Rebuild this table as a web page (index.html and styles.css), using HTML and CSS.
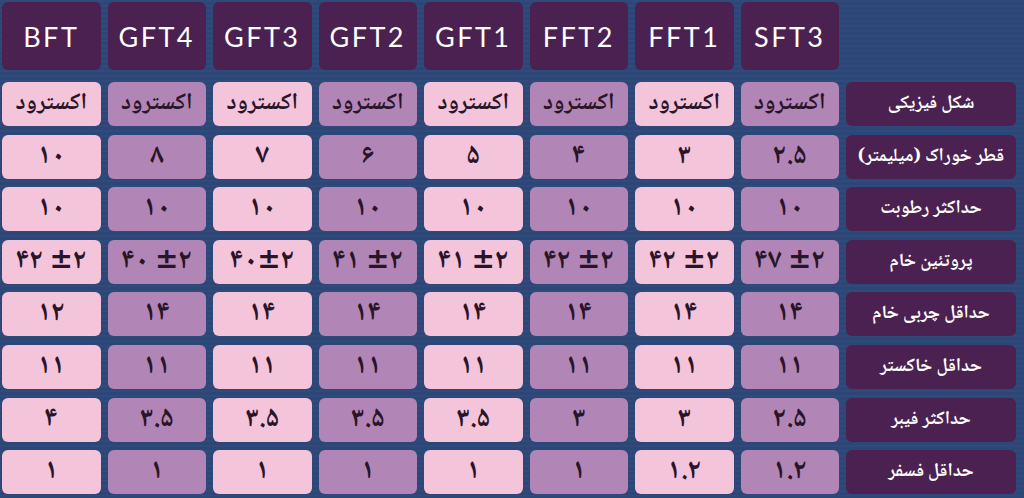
FILE: index.html
```html
<!DOCTYPE html>
<html lang="fa">
<head>
<meta charset="utf-8">
<title>جدول مشخصات خوراک</title>
<link rel="stylesheet" href="styles.css">
</head>
<body>
<div class="page">
  <div class="grid head">
    <div class="hcell">BFT</div>
    <div class="hcell">GFT4</div>
    <div class="hcell">GFT3</div>
    <div class="hcell">GFT2</div>
    <div class="hcell">GFT1</div>
    <div class="hcell">FFT2</div>
    <div class="hcell">FFT1</div>
    <div class="hcell">SFT3</div>
    <div class="hspacer"></div>
  </div>
  <div class="grid body">
    <div class="cell pink word">اکسترود</div>
    <div class="cell mauve word">اکسترود</div>
    <div class="cell pink word">اکسترود</div>
    <div class="cell mauve word">اکسترود</div>
    <div class="cell pink word">اکسترود</div>
    <div class="cell mauve word">اکسترود</div>
    <div class="cell pink word">اکسترود</div>
    <div class="cell mauve word">اکسترود</div>
    <div class="label" dir="rtl">شکل فیزیکی</div>

    <div class="cell pink">۱۰</div>
    <div class="cell mauve">۸</div>
    <div class="cell pink">۷</div>
    <div class="cell mauve">۶</div>
    <div class="cell pink">۵</div>
    <div class="cell mauve">۴</div>
    <div class="cell pink">۳</div>
    <div class="cell mauve">۲.۵</div>
    <div class="label" dir="rtl">قطر خوراک (میلیمتر)</div>

    <div class="cell pink">۱۰</div>
    <div class="cell mauve">۱۰</div>
    <div class="cell pink">۱۰</div>
    <div class="cell mauve">۱۰</div>
    <div class="cell pink">۱۰</div>
    <div class="cell mauve">۱۰</div>
    <div class="cell pink">۱۰</div>
    <div class="cell mauve">۱۰</div>
    <div class="label" dir="rtl">حداکثر رطوبت</div>

    <div class="cell pink">۴۲ ±۲</div>
    <div class="cell mauve">۴۰ ±۲</div>
    <div class="cell pink">۴۰±۲</div>
    <div class="cell mauve">۴۱ ±۲</div>
    <div class="cell pink">۴۱ ±۲</div>
    <div class="cell mauve">۴۲ ±۲</div>
    <div class="cell pink">۴۲ ±۲</div>
    <div class="cell mauve">۴۷ ±۲</div>
    <div class="label" dir="rtl">پروتئین خام</div>

    <div class="cell pink">۱۲</div>
    <div class="cell mauve">۱۴</div>
    <div class="cell pink">۱۴</div>
    <div class="cell mauve">۱۴</div>
    <div class="cell pink">۱۴</div>
    <div class="cell mauve">۱۴</div>
    <div class="cell pink">۱۴</div>
    <div class="cell mauve">۱۴</div>
    <div class="label" dir="rtl">حداقل چربی خام</div>

    <div class="cell pink">۱۱</div>
    <div class="cell mauve">۱۱</div>
    <div class="cell pink">۱۱</div>
    <div class="cell mauve">۱۱</div>
    <div class="cell pink">۱۱</div>
    <div class="cell mauve">۱۱</div>
    <div class="cell pink">۱۱</div>
    <div class="cell mauve">۱۱</div>
    <div class="label" dir="rtl">حداقل خاکستر</div>

    <div class="cell pink">۴</div>
    <div class="cell mauve">۳.۵</div>
    <div class="cell pink">۳.۵</div>
    <div class="cell mauve">۳.۵</div>
    <div class="cell pink">۳.۵</div>
    <div class="cell mauve">۳</div>
    <div class="cell pink">۳</div>
    <div class="cell mauve">۲.۵</div>
    <div class="label" dir="rtl">حداکثر فیبر</div>

    <div class="cell pink">۱</div>
    <div class="cell mauve">۱</div>
    <div class="cell pink">۱</div>
    <div class="cell mauve">۱</div>
    <div class="cell pink">۱</div>
    <div class="cell mauve">۱</div>
    <div class="cell pink">۱.۲</div>
    <div class="cell mauve">۱.۲</div>
    <div class="label" dir="rtl">حداقل فسفر</div>
  </div>
</div>
</body>
</html>
```
FILE: styles.css
```css
html, body {
  margin: 0;
  padding: 0;
}
body {
  width: 1024px;
  height: 498px;
  overflow: hidden;
  background-color: #2b4677;
  background-image: repeating-linear-gradient(180deg, rgba(255,255,255,0.025) 0px, rgba(255,255,255,0.025) 2px, rgba(0,0,0,0) 2px, rgba(0,0,0,0) 5px);
}
.page {
  padding: 2px 0 0 2px;
}
.grid {
  display: grid;
  grid-template-columns: repeat(8, 98.5px) 170px;
  column-gap: 7px;
}
.head {
  grid-template-rows: 68px;
}
.body {
  margin-top: 12px;
  grid-template-rows: repeat(8, 44px);
  row-gap: 8.6px;
}
.hcell {
  background: #4a2150;
  border-radius: 6px;
  color: #ffffff;
  font-family: "Lato", "DejaVu Sans", sans-serif;
  font-size: 27px;
  letter-spacing: 2.5px;
  display: flex;
  align-items: center;
  justify-content: center;
}
.cell {
  border-radius: 6px;
  display: flex;
  align-items: center;
  justify-content: center;
  color: #2a1428;
  font-family: "Noto Naskh Arabic", "Noto Sans Arabic", "DejaVu Sans", sans-serif;
  font-weight: 900;
  font-size: 28px;
  line-height: 1;
  white-space: nowrap;
}
.cell.word {
  font-size: 23px;
}
.pink {
  background: #f4c4da;
}
.mauve {
  background: #b186b6;
}
.label {
  background: #4a2150;
  border-radius: 6px;
  color: #ffffff;
  font-family: "Noto Naskh Arabic", "Noto Sans Arabic", "DejaVu Sans", sans-serif;
  font-weight: bold;
  font-size: 18.5px;
  white-space: nowrap;
  display: flex;
  align-items: center;
  justify-content: center;
}
```
